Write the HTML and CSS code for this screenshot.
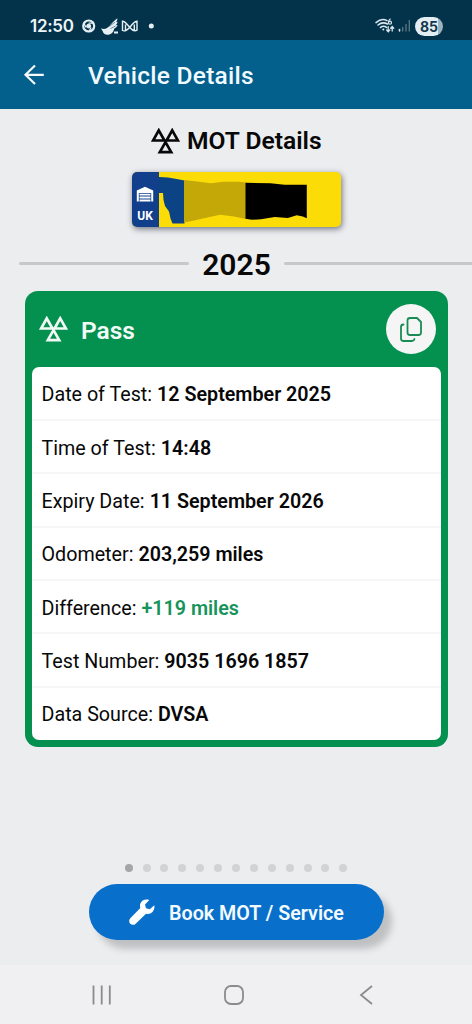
FILE: index.html
```html
<!DOCTYPE html>
<html lang="en">
<head>
<meta charset="utf-8">
<title>Vehicle Details</title>
<link rel="stylesheet" href="styles.css">
</head>
<body>
<svg class="defs" width="0" height="0" aria-hidden="true">
  <symbol id="mot" viewBox="0 0 28 25">
    <path d="M7.500 2.200 L13 12 H2 Z M20.500 2.200 L26 12 H15 Z M14 13.600 L19.500 23.300 H8.500 Z" fill="none" stroke="currentColor" stroke-width="2.600"/>
  </symbol>
</svg>
<div class="status">
  <span class="clock">12:50</span>
  <svg class="apps" width="74" height="20" viewBox="80 16 74 20" fill="none" stroke="#e6f0f4">
    <circle cx="88.700" cy="26" r="5.500" stroke-width="2.200"/>
    <circle cx="88.700" cy="26" r="2" fill="#e6f0f4" stroke-width="1"/>
    <path d="M88.700 23.200H94M91.200 27.500L88.500 32M86.200 27.500L83.600 23" stroke-width="1.300"/>
    <path d="M101 28.500c2 .5 4 .8 6-.5 3-2 5.500-6.500 10.500-9.800-.2 2-.8 3.200-1.600 4l1.700-.5c-.3 1.700-1.100 2.900-2.200 3.500l2.200-.1c-.6 2-2 3-3.500 3.600-.5 3.500-3 6-6.500 6-2.700 0-4.600-1.300-5-3.700z" fill="#e6f0f4" stroke="none"/>
    <path d="M109 26.500l6-4.300M110.500 28.500l5-2.500" stroke="#03324b" stroke-width=".5"/>
    <path d="M114 32.500h4" stroke-width="2"/>
    <path d="M122.500 30.500v-9.200c2.500 0 4 2.200 7.300 6.200 3 3.600 4.700 4 7.200 2.700v-9c-3 0-4 2.500-7.200 6-3.100 3.400-5 4.500-7.300 3.300zM125.500 30v-5.500M134.300 30v-5.500" stroke-width="1.400"/>
    <circle cx="151.300" cy="26" r="2.500" fill="#e6f0f4" stroke="none"/>
  </svg>
  <svg class="signal" width="38" height="20" viewBox="374 16 38 20" fill="none" stroke="#dce7ec" stroke-linecap="round">
    <path d="M376 22.600c3.500-3 8-3.600 11-2M378 25c3-2.500 6.500-2.700 9.500-1M380.500 27.400c2-1.500 4-1.500 6 0" stroke-width="1.600"/>
    <circle cx="383.300" cy="29.500" r="1" fill="#dce7ec" stroke="none"/>
    <path d="M390.300 19c-1.300.5-1.800 1.700-1.800 3.500" stroke-width="1.200"/>
    <circle cx="390" cy="22.700" r="1.500" stroke-width="1.200"/>
    <path d="M388.200 26.700v4.800M386.700 30l1.500 1.700 1.500-1.700M392.200 31v-4.200M390.700 28.300l1.500-1.700 1.500 1.700" stroke-width="1.300"/>
    <path d="M399.500 29.500v1.500" stroke-width="1.600"/>
    <path d="M402.700 27.500V31M406 24.500V31M409.300 20.500V31" stroke="#55727f" stroke-width="1.400"/>
  </svg>
  <span class="battery">85</span>
</div>
<header class="bar">
  <svg width="22" height="22" viewBox="23 64 22 22" fill="none" stroke="#f5fafd" stroke-width="2.200"><path d="M43.800 74.800H25.500M35 65.500L25.500 74.800L35 84"/></svg>
  <h1>Vehicle Details</h1>
</header>
<main>
  <div class="heading"><svg width="29" height="26"><use href="#mot"/></svg><h2>MOT Details</h2></div>
  <div class="plate">
    <div class="region">
      <svg width="18" height="16" viewBox="0 0 18 16"><path d="M.8 15.500V4.500L9 .8l8.200 3.700v11h-2V7H2.800v8.500z" fill="#fff"/><path d="M3.500 8.700h11M3.500 11.500h11M3.500 14.500h11" stroke="#fff" stroke-width="1.800"/></svg>
      <span>UK</span>
    </div>
    <svg class="masked" width="182" height="55" viewBox="159 172 182 55">
      <path d="M158 177l10 .5 10 1.700 6.500 1.300V223.500h-12l-2-5-1.500-7-4-5.500-1.500-6-.5-7H158z" fill="#0c4385"/>
      <path d="M184 180l13 1.500 14 1.700 12-1.500 15 0 8 .8V219l-12-2.500-14-1.700-16 3.500-11 2.500-9 1.800z" fill="#c4a807"/>
      <path d="M245.500 182.800l25 .5 14 1.500h22.300v33.500l-4-1.700-6-1.300-9 2.700-13-1-14 2.300-9 .5-6.300-1z" fill="#000"/>
    </svg>
  </div>
  <div class="year"><i></i><strong>2025</strong><i></i></div>
  <section class="card">
    <div class="cardhead">
      <svg width="29" height="26"><use href="#mot"/></svg>
      <h3>Pass</h3>
      <button class="copy" aria-label="Copy"><svg width="24" height="26" viewBox="399 315 24 26" fill="none" stroke="#198b55" stroke-width="1.800" stroke-linecap="round" stroke-linejoin="round"><path d="M410 317h7l4 4v10.500q0 2.500-2.500 2.500H410q-2.500 0-2.500-2.500V319.500q0-2.500 2.500-2.500zM403.500 323.500q-2.500 0-2.500 2.500v11.500q0 2.500 2.500 2.500h8.500q2 0 2.500-2"/></svg></button>
    </div>
    <div class="rows">
      <p>Date of Test: <b>12 September 2025</b></p>
      <p>Time of Test: <b>14:48</b></p>
      <p>Expiry Date: <b>11 September 2026</b></p>
      <p>Odometer: <b>203,259 miles</b></p>
      <p>Difference: <b class="gain">+119 miles</b></p>
      <p>Test Number: <b>9035 1696 1857</b></p>
      <p>Data Source: <b>DVSA</b></p>
    </div>
  </section>
  <div class="dots"><i class="on"></i><i></i><i></i><i></i><i></i><i></i><i></i><i></i><i></i><i></i><i></i><i></i><i></i></div>
  <button class="book">
    <svg width="26" height="26" viewBox="0 0 26 26"><path d="M25.300 6.200l-4.500 4-3.800-1-1-3.700 4.300-4.400C16.500-.3 12.500 1.300 11.300 4.800c-.5 1.600-.4 3 0 4.300L1.300 19.300c-3.500 4 1.700 8.800 5.400 5.400L17 14.800c5 1.300 9.300-3 8.300-8.600z" fill="#fff"/></svg>
    <span>Book MOT / Service</span>
  </button>
</main>
<nav class="nav">
  <svg width="20" height="20" fill="none" stroke="#8b8b8d" stroke-width="1.800"><path d="M1.500 .5v19M9.700 .5v19M17.800 .5v19"/></svg>
  <svg class="home" width="20" height="20" fill="none" stroke="#8b8b8d" stroke-width="1.800"><rect x="1" y="1" width="18" height="18" rx="6"/></svg>
  <svg width="14" height="20" fill="none" stroke="#8b8b8d" stroke-width="1.800"><path d="M13 1L2 10l11 9"/></svg>
</nav>
</body>
</html>
```
FILE: styles.css
```css
* { box-sizing: border-box; }
body { margin: 0; width: 472px; height: 1024px; background: #ecedef; font-family: Roboto, sans-serif; color: #080808; display: flex; flex-direction: column; overflow: hidden; }
h1, h2, h3, p { margin: 0; }
svg { display: block; flex: none; }
button { border: 0; font: inherit; padding: 0; }
.defs { position: absolute; }
.status { height: 40px; background: #03324b; display: flex; align-items: center; padding: 12px 29px 0 30px; flex: none; }
.clock { font: 600 17px/20px Inter, sans-serif; width: 50px; color: #eef5f8; letter-spacing: -.3px; white-space: nowrap; }
.signal { margin-left: auto; }
.battery { width: 28px; height: 19px; margin-left: 3px; border-radius: 10px; background: linear-gradient(90deg, #e3eef4 82%, #9eb2be 82%); color: #14384c; font: 700 14px/19px Inter, sans-serif; text-align: center; }
.bar { height: 69px; background: #035f8c; display: flex; align-items: center; padding-left: 23px; gap: 43px; flex: none; }
.bar h1 { font-size: 24.500px; line-height: 30px; font-weight: 500; color: #f1faff; letter-spacing: .25px; padding-top: 2px; }
main { height: 856px; flex: none; display: flex; flex-direction: column; align-items: center; }
.heading { height: 63px; width: 100%; display: flex; align-items: center; padding-left: 151px; gap: 7px; }
.heading h2 { font-size: 24.600px; line-height: 30px; font-weight: 600; white-space: nowrap; padding-top: 1px; }
.plate { width: 209px; height: 55px; flex: none; display: flex; border-radius: 5px; overflow: hidden; background: #fbdc07; box-shadow: 1px 2px 6px #6f7380; }
.region { width: 27px; background: #123f8b; color: #fff; display: flex; flex-direction: column; align-items: center; padding-top: 14px; gap: 6px; flex: none; }
.region span { font-size: 12px; line-height: 16px; font-weight: 700; }
.year { width: 453px; margin: 16px 0 8px 19px; height: 40px; display: flex; align-items: center; flex: none; }
.year i { width: 170px; height: 3px; background: #c7c8ca; border-radius: 2px; }
.year i:last-child { width: 188px; border-radius: 2px 0 0 2px; }
.year strong { flex: 1; font-size: 30px; line-height: 36px; font-weight: 600; text-align: center; padding-top: 3px; }
.card { width: 423px; height: 456px; border-radius: 13px; background: #04904f; padding: 0 7px 7px; flex: none; }
.cardhead { height: 75.500px; display: flex; align-items: center; padding: 1px 5px 0 7px; color: #f1faf5; }
.cardhead h3 { font-size: 24.500px; line-height: 30px; font-weight: 600; margin-left: 13.500px; padding-top: 3px; }
.copy { width: 50px; height: 50px; border-radius: 50%; background: #f5f5f5; margin-left: auto; display: flex; align-items: center; justify-content: center; }
.rows { height: 373.500px; background: #fff; border-radius: 7px; overflow: hidden; display: grid; grid-template-rows: repeat(6, 53.350px) 1fr; padding-top: 1px; }
.rows p { border-bottom: 2px solid #f5f6f6; padding: 4px 10px 0; display: flex; align-items: center; gap: 5px; font-size: 19.700px; line-height: 28px; white-space: nowrap; }
.rows p:last-child { border: 0; padding-top: 2px; }
.rows b { font-weight: 600; }
.rows .gain { color: #16945a; }
.dots { display: flex; gap: 9.900px; margin-top: 117px; height: 8px; flex: none; }
.dots i { width: 8px; height: 8px; border-radius: 50%; background: #d2d3d5; }
.dots .on { background: #a6a6a8; }
.book { margin-top: 12px; width: 295px; height: 56px; border-radius: 28px; background: #086fca; color: #f4fbff; display: flex; align-items: center; padding-left: 40px; gap: 14.500px; box-shadow: 8px 9px 7px #bfc0c2; flex: none; }
.book span { font-size: 19.700px; line-height: 28px; font-weight: 600; white-space: nowrap; padding-top: 3px; }
.nav { height: 59px; background: #f0f0f2; display: flex; align-items: center; padding: 0 99px 0 92px; justify-content: space-between; flex: none; }
.home { margin-right: 4px; }
```
